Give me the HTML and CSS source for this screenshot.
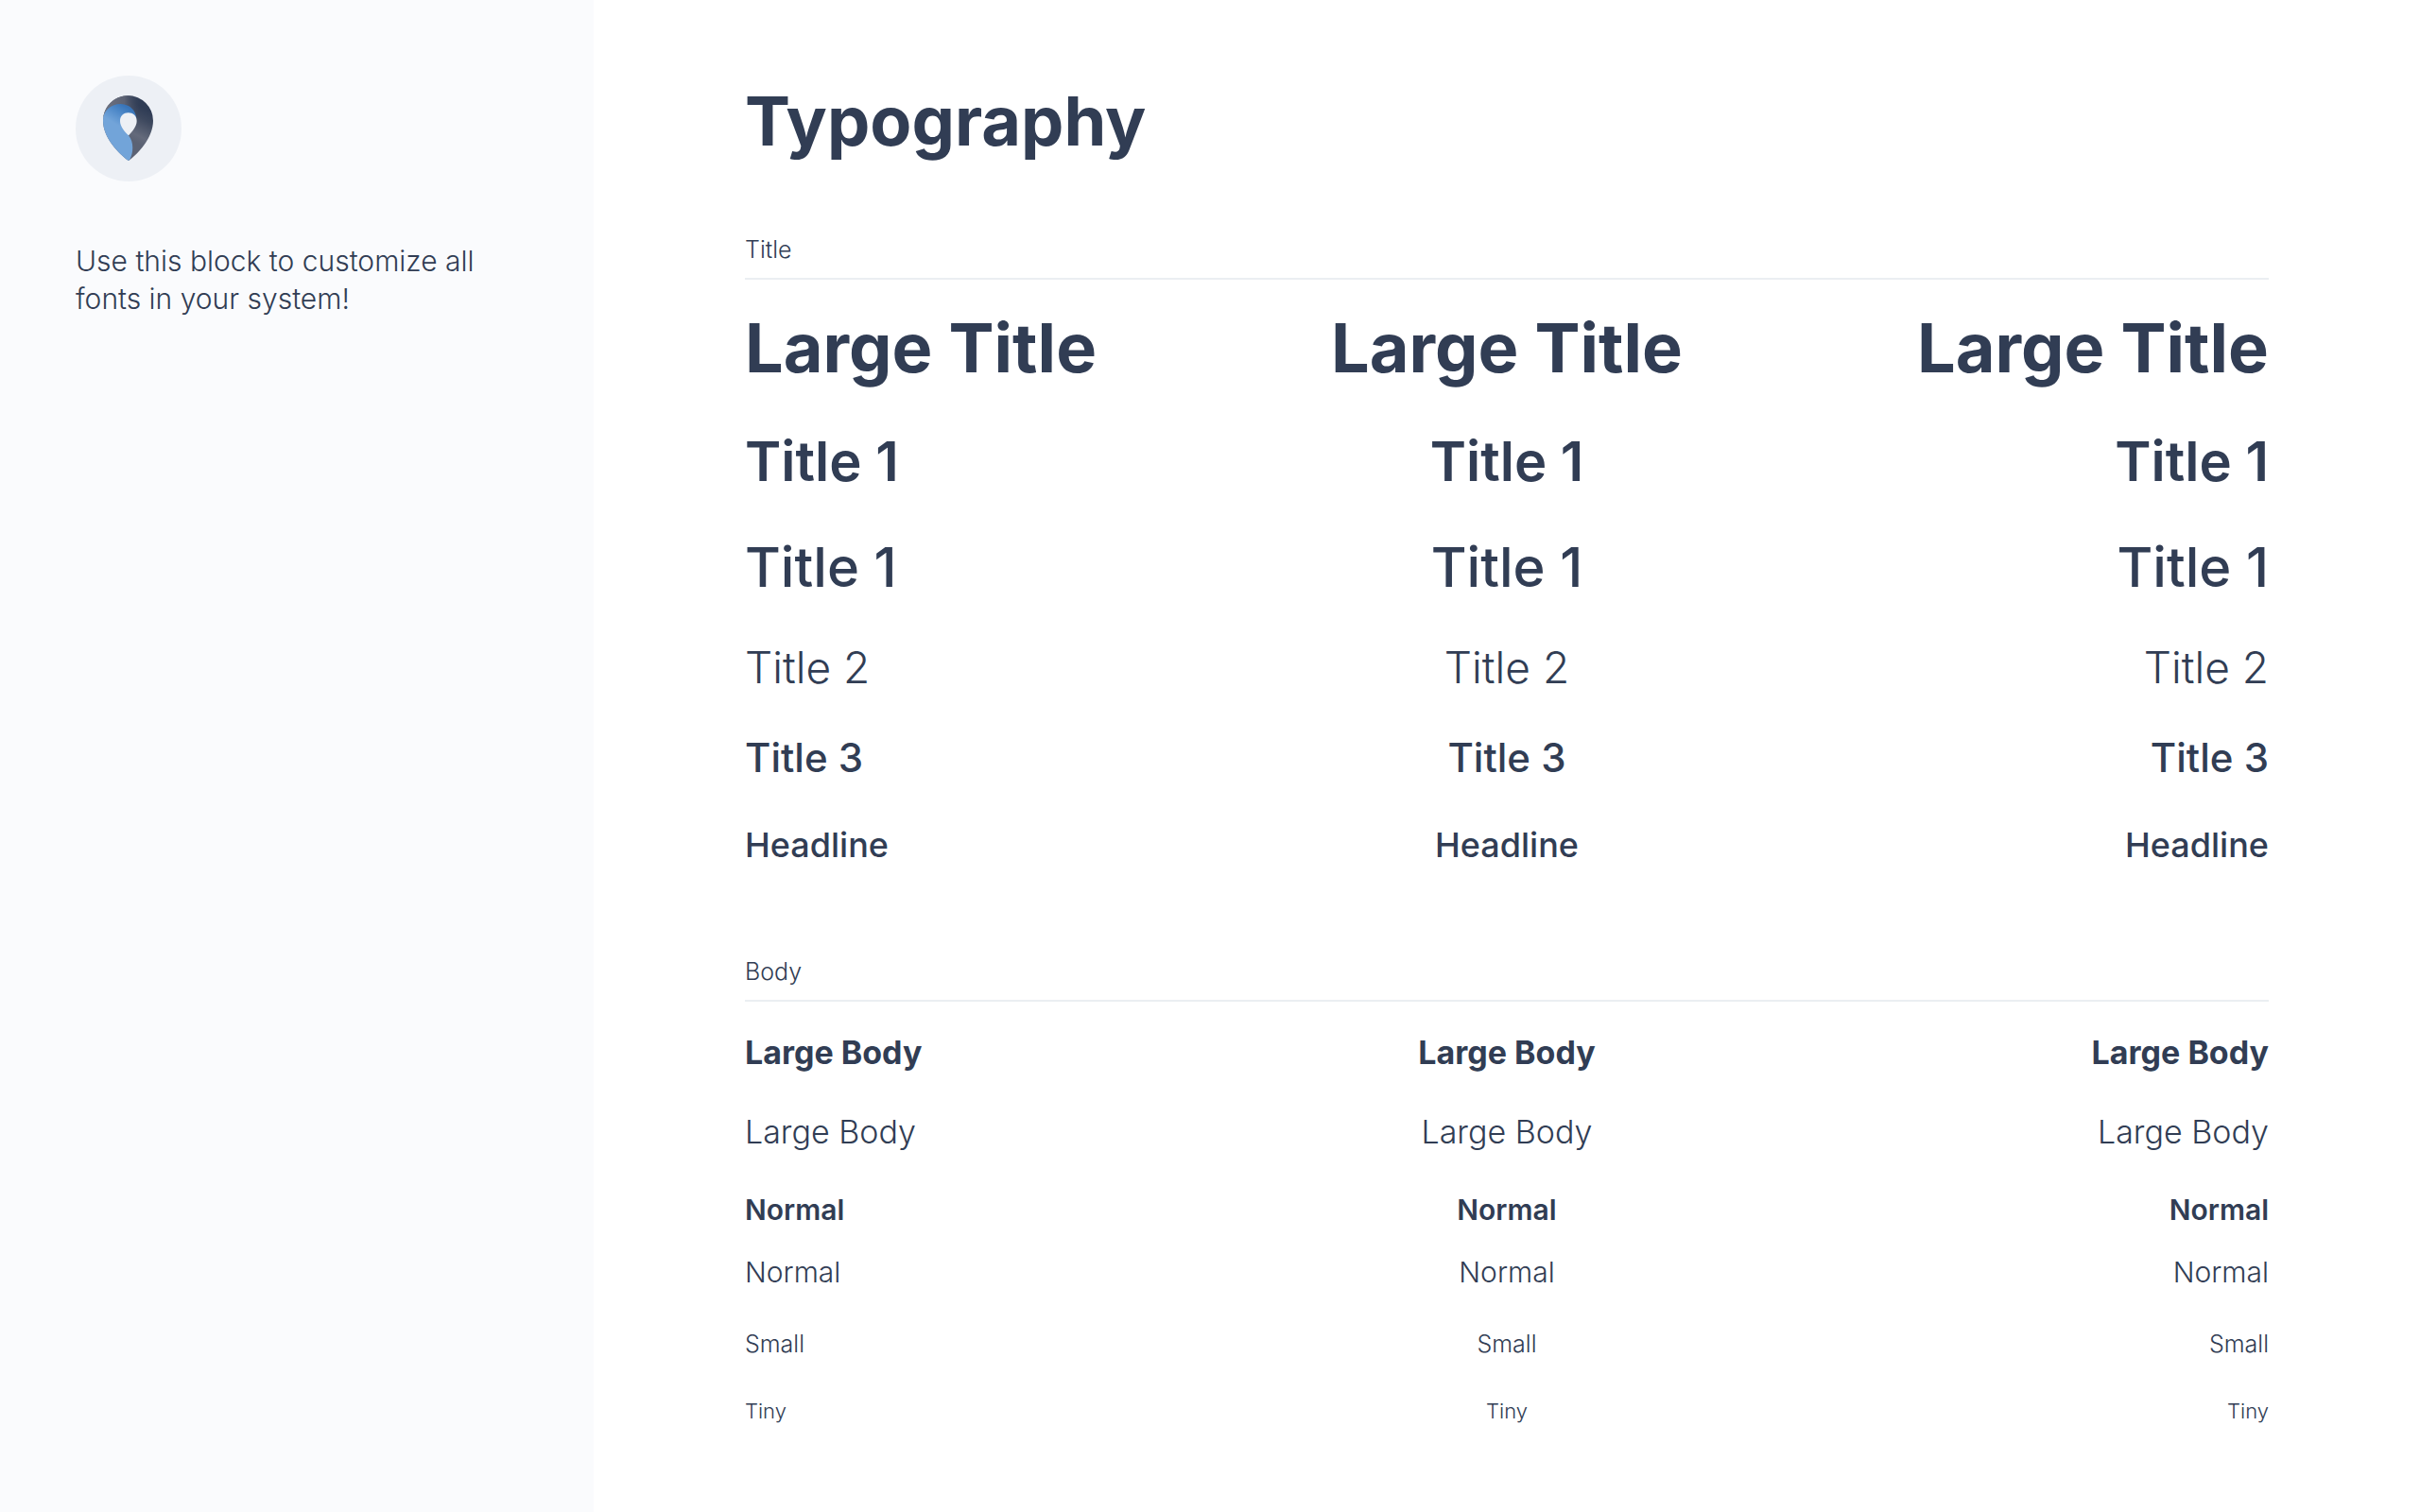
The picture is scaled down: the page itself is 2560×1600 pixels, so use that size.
FILE: index.html
```html
<!DOCTYPE html>
<html lang="en">
<head>
  <meta charset="utf-8">
  <meta name="viewport" content="width=device-width, initial-scale=1">
  <title>Typography</title>
  <link rel="stylesheet" href="styles.css">
</head>
<body>
  <div class="page">
    <aside class="sidebar">
      <svg class="logo" viewBox="60 60 336 336" role="img" aria-label="Logo">
        <defs>
          <linearGradient id="pin-dark" gradientUnits="userSpaceOnUse" x1="290" y1="170" x2="240" y2="265">
            <stop offset="0" stop-color="#2f3c55"/>
            <stop offset="0.3" stop-color="#3d485e"/>
            <stop offset="0.8" stop-color="#646a7b"/>
            <stop offset="1" stop-color="#5b6274"/>
          </linearGradient>
          <linearGradient id="pin-top" gradientUnits="userSpaceOnUse" x1="165" y1="160" x2="265" y2="160">
            <stop offset="0" stop-color="#6a6f7e"/>
            <stop offset="0.5" stop-color="#5c6274"/>
            <stop offset="1" stop-color="#3d485e" stop-opacity="0"/>
          </linearGradient>
          <linearGradient id="pin-blue" gradientUnits="userSpaceOnUse" x1="222" y1="158" x2="188" y2="214">
            <stop offset="0" stop-color="#3874b8"/>
            <stop offset="0.4" stop-color="#4d88c8"/>
            <stop offset="1" stop-color="#72a4d9"/>
          </linearGradient>
        </defs>
        <circle cx="228" cy="228" r="168" fill="#edf0f5"/>
        <path fill="url(#pin-dark)" d="M228 330C198 309 147 257 147 203A79.500 79.500 0 0 1 306 203C306 257 258 309 228 330Z"/>
        <path fill="url(#pin-top)" d="M148 190A79.500 79.500 0 0 1 270 136L252 190Z"/>
        <path fill="url(#pin-blue)" d="M228 330C198 309 147 257 147 203C147 170 173 150 203 150C234 152 250 170 253 196L228 250C246 272 243 306 232 327Z"/>
        <path fill="#edf0f5" d="M228 250C215 237 201 222 201 204C201 188 213 178 227 178C242 178 254 188 254 204C254 222 240 237 228 250Z"/>
      </svg>
      <p class="intro">Use this block to customize all fonts in your system!</p>
    </aside>

    <main class="content">
      <h1 class="heading">Typography</h1>

      <section class="section">
        <h2 class="label">Title</h2>
        <div class="row large-title"><p>Large Title</p><p>Large Title</p><p>Large Title</p></div>
        <div class="row title-1 semibold"><p>Title 1</p><p>Title 1</p><p>Title 1</p></div>
        <div class="row title-1"><p>Title 1</p><p>Title 1</p><p>Title 1</p></div>
        <div class="row title-2"><p>Title 2</p><p>Title 2</p><p>Title 2</p></div>
        <div class="row title-3"><p>Title 3</p><p>Title 3</p><p>Title 3</p></div>
        <div class="row headline"><p>Headline</p><p>Headline</p><p>Headline</p></div>
      </section>

      <section class="section section-body">
        <h2 class="label">Body</h2>
        <div class="row large-body bold"><p>Large Body</p><p>Large Body</p><p>Large Body</p></div>
        <div class="row large-body"><p>Large Body</p><p>Large Body</p><p>Large Body</p></div>
        <div class="row normal semibold"><p>Normal</p><p>Normal</p><p>Normal</p></div>
        <div class="row normal paired"><p>Normal</p><p>Normal</p><p>Normal</p></div>
        <div class="row small"><p>Small</p><p>Small</p><p>Small</p></div>
        <div class="row tiny"><p>Tiny</p><p>Tiny</p><p>Tiny</p></div>
      </section>
    </main>
  </div>
</body>
</html>
```
FILE: styles.css
```css
* {
  box-sizing: border-box;
}

body {
  margin: 0;
  background: #fff;
  color: #313d54;
  font-family: Inter, "Open Sans", sans-serif;
  font-weight: 350;
}

h1,
h2,
p {
  margin: 0;
}

.page {
  display: flex;
  min-height: 100vh;
}

.sidebar {
  flex: 0 0 628px;
  padding: 80px;
  background: #fafbfd;
}

.logo {
  display: block;
  width: 112px;
  height: 112px;
  margin-bottom: 64px;
}

.intro {
  font-size: 30px;
  line-height: 40px;
}

.content {
  flex: 1;
  min-width: 0;
  padding: 88px 160px;
}

.heading {
  margin-bottom: 80px;
  font-size: 72px;
  font-weight: 700;
  line-height: 80px;
}

.section + .section {
  margin-top: 96px;
}

.label {
  margin-bottom: 32px;
  padding-bottom: 14px;
  border-bottom: 2px solid #ebeef2;
  font-size: 25px;
  font-weight: 350;
  line-height: 32px;
}

.row {
  display: grid;
  grid-template-columns: repeat(3, 1fr);
}

.row + .row {
  margin-top: 48px;
}

.section-body .row + .row {
  margin-top: 40px;
}

.section-body .row + .paired {
  margin-top: 26px;
}

.row p:nth-child(2) {
  text-align: center;
}

.row p:nth-child(3) {
  text-align: right;
}

.large-title {
  font-size: 72px;
  font-weight: 700;
  line-height: 80px;
}

.title-1 {
  font-size: 58px;
  font-weight: 450;
  line-height: 64px;
}

.title-2 {
  font-size: 46px;
  font-weight: 300;
  line-height: 52px;
}

.title-3 {
  font-size: 42px;
  font-weight: 450;
  line-height: 44px;
}

.headline {
  font-size: 36px;
  font-weight: 450;
  line-height: 44px;
}

.large-body {
  font-size: 34px;
  line-height: 44px;
}

.normal {
  font-size: 30px;
  line-height: 40px;
}

.small {
  font-size: 25px;
  line-height: 32px;
}

.tiny {
  font-size: 22px;
  line-height: 30px;
}

.semibold {
  font-weight: 600;
}

.bold {
  font-weight: 700;
}
```
